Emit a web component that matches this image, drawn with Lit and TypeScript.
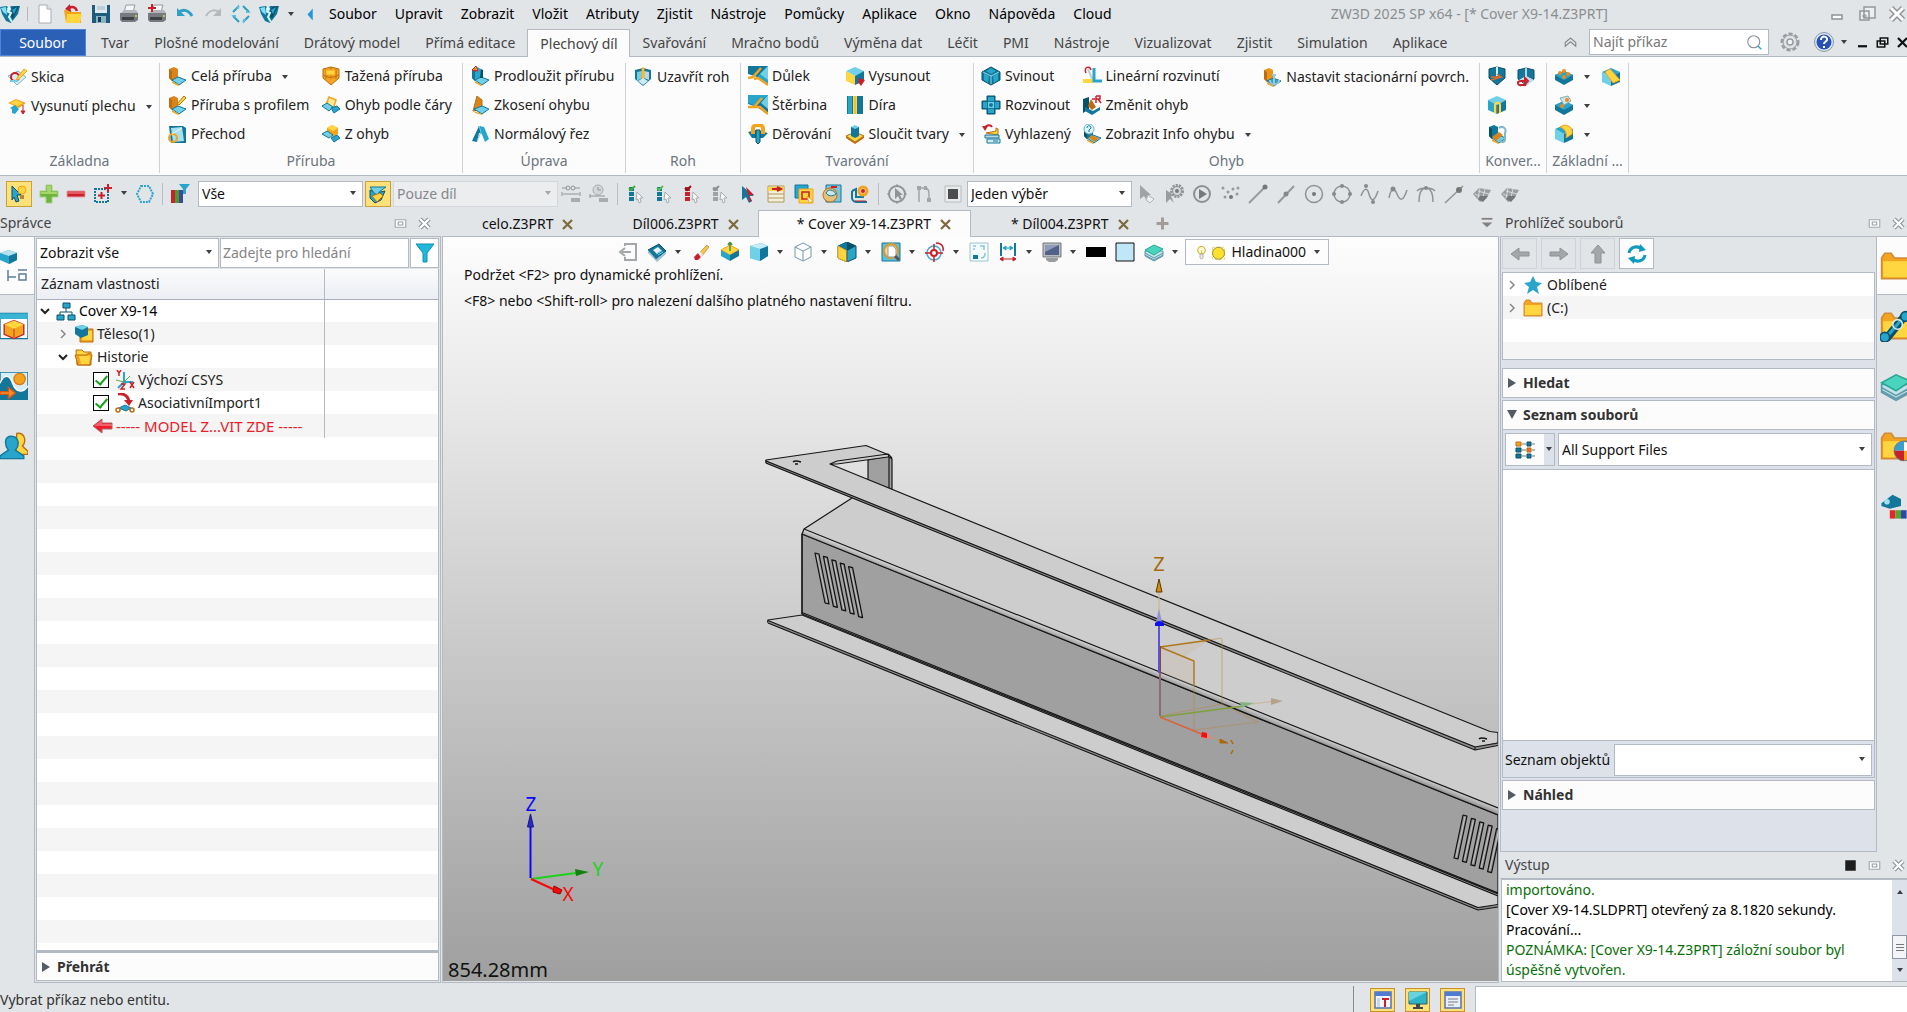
import { LitElement, html, svg, css } from "lit";
import { customElement, property, state } from "lit/decorators.js";
import { classMap } from "lit/directives/class-map.js";

const p = (d: string, fill = "none", stroke = "none", w = 1) =>
  svg`<path d=${d} fill=${fill} stroke=${stroke} stroke-width=${w}></path>`;
const c = (x: number, y: number, r: number, fill = "none", stroke = "none", w = 1) =>
  svg`<circle cx=${x} cy=${y} r=${r} fill=${fill} stroke=${stroke} stroke-width=${w}></circle>`;

const A = "#6fd0e8", T = "#27a5ca", D = "#12779b", N = "#0b5069";
const Y = "#ffd640", O = "#f2a41f", B = "#bd6c12", G = "#8f9396", R = "#c9202b";

const cube = (top: string, left: string, right: string) => [
  p("M10 1l9 4-9 5-9-5z", top),
  p("M1 5l9 5v9l-9-4z", left),
  p("M19 5l-9 5v9l9-4z", right),
];
const bracket = (plate: string, edge: string, base: string) => [
  p("M2 3l5-2 4 2v9l-6 3-3-3z", plate),
  p("M2 3l3 2v10l-3-3z", edge),
  p("M5 14l6-3 8 3-7 5z", base, D, 1),
  p("M5 15l7 4-1 1-6-3z", O),
];
const listIcon = (bar: string, tick: string) => [
  p("M3 3h5v4H3zM3 8h5v4H3zM3 13h5v4H3z", bar),
  p("M3 4l2 2 4-4", "none", tick, 2),
  p("M11 8l6 6h-3l1 4-2 1-1-4-2 1z", "#f7f7f7", "#a9adb1"),
];
const folder = (extra: unknown = null) => [
  p("M1 5l2-3h4l2 3h10v13H1z", O, "#d08a3a"),
  p("M2 7h16v10H2z", Y),
  extra,
];
const surface = [
  p("M1 10l6-6 12 2-5 9-6 3z", "#9a9d9f"),
  p("M3 10l11 5M6 7l11 3M8 4l-2 11M13 5l-3 12", "none", "#d8dadb"),
  p("M8 12h8l-5 6-5-3z", "#747779"),
];

const ICONS: Record<string, unknown> = {
  logo: [p("M0 3l7-1 2 3 2-3h9l-2 8-7 9-5-2-4-7z", D), p("M1 4l5-1 1 8-4-3z", "#7fe0f5"), p("M13 3l6-1-6 13-3-4z", N), p("M12 6l5-3-3 7z", T), p("M7 7l4 2-2 4 3 5", "none", "#d7f4fb", 2), c(9, 5, 2, "#e9f6fa")],
  newdoc: [p("M4 1h8l4 4v14H4z", "#fff", "#a8adb3"), p("M12 1v4h4", "#e8ebee", "#a8adb3")],
  open: [p("M1 6h6l2 2h9v11H3z", O), p("M4 10h15l-2 9H3z", Y), p("M14 7C13 3 9 2 6 4", "none", R, 2.5), p("M7 0L2 5l6 3z", R)],
  save: [p("M1 1h18v18H1z", "#1f5c7c"), p("M4 1h12v8H4z", "#dfe8ee"), p("M5 12h10v7H5z", "#8db2c4"), p("M7 13h3v5H7z", "#123f55"), p("M6 3h8M6 5h8", "none", "#9fb4bf")],
  print: [p("M5 8l2-7h9l-2 7z", "#f4f5f6", "#999"), p("M1 9h18v7l-3 2H3l-2-2z", "#777b80"), p("M2 9l3-3h12l2 3z", "#b2b6ba"), p("M3 13h12v3H3z", "#3f4347"), c(17, 12, 1, "#e8d23a")],
  undo: [p("M3 9C7 5 13 5 17 12", "none", "#2d9fc4", 3), p("M2 4v8h8z", "#2d9fc4")],
  redo: [p("M17 9C13 5 7 5 3 12", "none", "#b5b9bc", 2), p("M18 4v8h-8z", "#b5b9bc")],
  refresh: [p("M8 2L2 8M2 12l6 6M12 18l6-6M18 8l-6-6", "none", "#2a9fbf", 2), p("M8 0v5H5zM0 11h5v3zM12 20v-5h3zM20 9h-5V6z", "#5bc0d8")],
  back: [p("M13 2v16L6 10z", "#2196d9")],
  sketch: [p("M1 9l10-5 8 6-9 8z", "#d8eef6", "#7fb4c8"), c(8, 10, 4, "none", R, 2), p("M10 11l7-9 3 2-8 8-3 1z", Y, O), p("M3 14h8", "none", A, 2)],
  sheetpull: [p("M1 7l8-4 10 4-7 5z", O), p("M3 7l6-3 7 3-5 3z", Y), p("M3 12l5-3 4 4-4 5-3-1v-4z", T), p("M16 9v7M14 15l2 3 2-3z", R, R, 1)],
  flange: bracket("#d8861c", B, A),
  flangeprof: [bracket("#d8861c", B, A), p("M10 9l7-8 2 2-7 7z", Y, B)],
  transition: [p("M2 2h14l3 2v15H4z", D), p("M4 4l11-1 2 14-11 1z", "#a8dfec"), c(6, 14, 4, "none", O, 2), p("M5 10l10-6", "none", "#eaf9fc")],
  swept: [p("M2 3l8-2 8 2v9l-8 7-8-7z", O, B), p("M10 1v10M2 9l8 3 8-3M5 3v10M15 3v10", "none", B), p("M5 4h9v5H5z", Y, O)],
  bendline: [p("M8 2l7 3-3 9-7-4z", "#ffe79a", O, 1.5), p("M1 11l5-3 6 4-4 4z", A, D), p("M10 13l6-2 3 3-6 4z", T, D)],
  zbend: [p("M6 4l5-3 6 3v6l-5 3-6-3z", O), p("M6 4l5-3 6 3-5 3z", Y), p("M1 10l5-3 6 4-4 3z", A, D), p("M10 14l6-3 3 3-6 4z", T, D)],
  extend: [bracket(T, D, A), p("M5 6V2M2 4l4-4 2 5z", Y, R), p("M11 3l2 1v8h-3z", N)],
  taper: [p("M7 1l5 4v9l-9 2z", "#d8861c", B), p("M4 14l8-3 7 3-7 5z", A, D), p("M4 16l8 3v1l-7-2z", O)],
  normcut: [p("M2 17L9 2l5 2v6l-5-1-2 9z", D), p("M9 2l5 1 5 12-4 3-4-10z", T), p("M9 2l2 6-4 9", "none", A, 1)],
  corner: [p("M2 3l8-2 8 2v9l-8 7-8-7z", D), p("M4 5l5-1v7l-5 3z", A), p("M11 4l5 1v8l-5-2z", "#bcd7e0"), p("M9 1h2v11H9z", Y, O), p("M5 14l5-3 5 3-5 4z", "#cfeaf3")],
  dimple: [p("M0 0h20v19L0 12z", T), p("M20 0L9 11 0 8V0z", D), p("M0 8l9 3 11 9H0z", "#fcfcfc"), p("M0 12l5-1 8-9M6 13l4-1 10 7", "none", O, 2.5), p("M20 0v14l-8-6z", A)],
  louver: [p("M0 0h20v19L0 12z", D), p("M20 0L8 11 0 8V0z", T), p("M0 9l9 3 11 8H0z", "#fcfcfc"), p("M0 12h6l8-9M7 12h5l8 7", "none", O, 2.5), p("M20 0v14l-7-6z", A)],
  punch: [p("M0 8l8-2 12 3-5 5H4z", D), p("M5 10V4c0-4 10-4 10 0v6", "none", O, 4), p("M8 6h4v12l-2 2-2-2z", T, N)],
  extrude: [cube(A, Y, D), p("M14 12l6 2-4 6-3-4z", R)],
  hole: [p("M2 1h16v18H2z", D), p("M8 1h4v18H8z", Y), p("M10 1v18", "none", O), p("M3 1h4v18H3z", T)],
  merge: [p("M1 12l9-4 9 4-9 6z", Y, B), p("M1 12v2l9 6 9-6v-2l-9 6z", B), p("M6 3h8v9l-4 2-4-2z", D), p("M6 3l4-2 4 2-4 2z", A)],
  fold: [p("M1 6l9-5 9 5v8l-9 5-9-5z", D, N), p("M3 7l5 3-1 7-4-3zM17 7l-5 3 1 7 4-3zM10 2l5 3-5 3-5-3z", T), p("M2 6l8 4 8-4M10 10v8", "none", "#8fd6e8")],
  unfold: [p("M6 1h8v5h5v8h-5v5H6v-5H1V6h5z", D, N), p("M7 2h6v4H7zM2 7h4v6H2zM14 7h4v6h-4zM7 14h6v4H7z", T), p("M7 7h6v6H7z", A), c(10, 10, 2, D)],
  smooth: [p("M4 4C6 0 10 1 11 3", "none", R, 2), p("M1 2l3 5 3-5z", R), p("M5 9l10-2v-3l2 1v6z", Y, B), p("M4 11h14v3H4z", "#b5d8e3", D), p("M6 15h13v4H6z", "#d5e8ee", D), p("M12 17h5", "none", D)],
  linear: [p("M4 7C1 1 8-1 9 4", "none", R, 1.5), p("M6 3l5 12", "none", "#c0cdd2", 2), p("M1 15h10", "none", Y, 4), p("M12 2v13h8", "none", T, 3)],
  changebend: [p("M1 4l6-2v12l-6 4z", N), p("M3 12l8 4 7-4v3l-8 5-7-4z", D), p("M9 4l5 8-4 3-4-4z", B), p("M14 1v7M14 1h4v3h-4M16 4l3 4M10 4h3", "none", R, 1.5)],
  bendinfo: [bracket(D, N, A), c(7, 5, 5, "#dff4fa", "#6fb9cf"), p("M5 4c0-3 4-3 4 0L7 6v2", "none", D), p("M9 11l8 3-4 4-6-4z", "#d8861c")],
  stationary: [bracket("#e8951c", B, T), p("M12 7v11M8 13c0 6 9 6 9 0M10 8h4", "none", "#9fc6d3", 2)],
  conv1: [p("M2 3l8-2 8 2v9l-8 7-8-7z", D, N), p("M9 1h2v9H9z", "#d5edf4"), p("M4 11h10l-4-3M4 14l10-3", "none", "#e06a28", 1.5)],
  conv2: [p("M2 3l8-2 8 2v9l-8 6-8-6z", D, N), p("M10 1v9L3 14M10 10l7 4", "none", "#e7f5fa", 1.5), p("M4 13l6-4 8 4-7 5z", "#b8e0ee"), p("M10 14H5c-5 0-3 5 0 4h5M9 11l3 3-3 3z", "none", R, 2)],
  conv3: [cube(A, T, D), p("M8 18V10c0-3 5-3 5 0v8", "none", Y, 2), p("M10 11v7", "none", B)],
  conv4: [bracket(D, N, A), p("M5 13l7-5 4 3-7 6z", "#d8861c"), p("M12 4c4-3 8 1 6 5v6c0 4-5 4-5 0", "none", "#7fb7cd", 2)],
  base1: [p("M1 9l9-4 9 4v5l-9 5-9-5z", D), p("M1 9l9-4 9 4-9 5z", T), c(6, 7, 2, "#ed8a1e"), c(10, 5, 2, "#ed8a1e"), c(14, 8, 2, "#ed8a1e"), c(10, 11, 2, "#ed8a1e")],
  base2: [p("M1 10l9-4 9 4v5l-9 5-9-5z", D), p("M1 10l9-4 9 4-9 5z", T), p("M6 3l8-2 3 5-7 4z", "#cfe6ee", "#8aa"), c(8, 11, 2, "#ed8a1e"), c(13, 5, 2, "#ed8a1e")],
  base3: [cube(T, A, D), p("M6 3l5-2c6 1 8 4 7 9l-6 4c1-6-1-9-6-11z", Y, O)],
  base4: [cube(T, A, D), p("M9 2l10 11-7 3L4 5z", Y, O)],
  pick: [p("M3 2l9 9H8l2 6-3 1-2-5-2 3z", T, N), c(13, 6, 4, Y, O), p("M11 11h4v4h-4z", "#b0893a")],
  plus: [p("M7 1h6v6h6v6h-6v6H7v-6H1V7h6z", "#6db33c", "#a6cf86"), p("M8 2h4v6h6v2H2V8h6z", "#a5d667")],
  minus: [p("M1 7h18v6H1z", R, "#e3a5a8"), p("M2 8h16v2H2z", "#e65a62")],
  dotbox: [svg`<rect x="2" y="5" width="13" height="13" fill="none" stroke=${D} stroke-width="2" stroke-dasharray="2 1"></rect>`, p("M15 0v8M11 4h8M8.500 8v7M5 11.500h7", "none", R, 2)],
  dothex: [svg`<path d="M6 2h8l4 8-4 8H6L2 10z" fill="none" stroke=${T} stroke-width="2" stroke-dasharray="2 1"></path>`],
  filter: [p("M1 6h4v13H1z", R), p("M5 6h4v13H5z", "#4c9a2a"), p("M9 6h4v13H9z", "#3d4a9c"), p("M9 0h11l-4 5v5h-3V5z", T)],
  partonly: [p("M2 6l6 3 9-2-4 9-6 3-5-5z", T, N), p("M2 3h16l-7 5v4l-5-3z", A, D), p("M4 12l8-3 3 3-6 6z", Y, B)],
  ref1: [p("M1 4h5M14 4h5M2 10h16M1 8v4M19 8v4", "none", G), c(7, 4, 2, "none", G), c(12, 4, 2, "none", G), p("M10 14h9v4h-9z", "#a9acae")],
  ref2: [c(9, 6, 5, "#d4d6d8", "#a9acae"), p("M9 3v3h3M1 12h15M1 10v4", "none", G), p("M10 14h9v4h-9z", "#a9acae")],
  listgreen: listIcon(D, "#3faa3a"), listgreen2: listIcon(D, "#58c04e"), listred: listIcon(R, "#8c1720"), listgray: listIcon("#a0a3a5", "#8f9294"),
  arrowred: [p("M4 2v14l4-3 3 6 3-2-3-5h5z", D), p("M8 3l8 8h-5l3 6-2 1z", R)],
  rows: [p("M2 2h16v16H2z", "#f4efdc", "#b09a5a"), p("M2 3h16v4H2z", Y), p("M2 10h16M2 14h16", "none", "#b09a5a"), p("M6 5h7M11 3l4 2-4 2", R, R, 2)],
  layersel: [p("M1 1h13v13H1z", T, D), p("M5 5h14v14H5z", Y, O), p("M8 8h7v7H8z", "none", R, 1.5), p("M13 12l6 5-4 2z", "#fff", O)],
  paste: [p("M4 1h15v17H4z", "#7cc6da", D), c(8, 11, 7, "#e7c17c", B), p("M4 9c2-5 8-3 10 1-4 3-8 2-10-1z", "#c7e6ee", D), p("M9 3h6", "none", R, 2)],
  bracketgear: [p("M2 7v7c0 3 3 4 5 4h10M2 7l4-2v8h8", "none", D, 2), c(13, 7, 4, "none", O, 3), c(13, 7, 2, R), p("M5 17h11", "none", R)],
  cursorring: [c(10, 10, 8, "none", G, 2), p("M8 4v11l3-3 2 4 2-1-2-4h3z", G), p("M10 0v3M10 17v3M0 10h3M17 10h3", "none", G)],
  curveup: [p("M4 18V4h6c4 0 4 4 4 8v4", "none", "#a2a5a7", 1.5), p("M2 2h4v4H2zM12 14h4v4h-4zM9 2h3v4H9z", "#a2a5a7")],
  square: [p("M2 2h16v16H2z", "#e9ebec", "#b9bcbe"), p("M5 5h10v10H5z", "#4b4d4f")],
  cursor: [p("M4 1v14l4-3 4 6 2-2-3-5h4z", "#a0a3a5"), p("M12 11l6 4-4 4-4-3z", "#eee", "#b0b3b5")],
  gearcur: [svg`<circle cx="13" cy="7" r="5.500" fill="none" stroke="#8f9294" stroke-width="3" stroke-dasharray="2 1"></circle>`, c(13, 7, 4.5, "#d5d7d9", "#8f9294"), c(13, 7, 2, "#777a7c"), p("M2 6v13l4-4 4 4-3-7h4z", "#9a9da0")],
  play: [c(10, 10, 8, "none", "#8d9093", 2), p("M7 5l8 5-8 5z", "#77797c")],
  dots: [c(3, 4, 1.5, "#999"), c(8, 8, 1.5, "#999"), c(5, 13, 1.5, "#999"), c(13, 5, 1.5, "#999"), c(18, 4, 1.5, "#999"), c(11, 13, 2, "#777"), c(17, 10, 1.5, "#999")],
  lineend: [p("M1 19L17 3", "none", "#999", 2), c(17, 3, 2.5, "#777")],
  linemid: [p("M2 19L18 2", "none", "#999", 2), c(10, 10, 2.5, "#888")],
  circdot: [c(10, 10, 8.5, "none", "#8f9294", 1.5), c(10, 10, 2, "#777")],
  circquad: [c(10, 10, 8, "none", "#8f9294", 1.5), c(10, 2, 2, "#888"), c(10, 18, 2, "#888"), c(2, 10, 2, "#888"), c(18, 10, 2, "#888")],
  wave1: [p("M1 12c3-8 6-9 8-2s5 9 9-3", "none", "#8f9294", 1.5), c(6, 2, 2, "#888"), c(13, 18, 2, "#888")],
  wave2: [p("M1 14c2-10 5-11 8-4s6 8 10-4", "none", "#8f9294", 1.5), c(5, 5, 2.5, "#888")],
  tangent: [p("M1 7C5 3 15 3 19 7M3 18C3 10 5 5 9 4M17 18c0-8-2-13-6-14", "none", "#8f9294", 1.5), c(10, 4, 2, "#888")],
  linept: [p("M1 19L19 2", "none", "#8f9294", 1.5), c(15, 6, 3, "#777")],
  surface,
  exit: [p("M7 4V2h11v16H7v-3", "none", "#a4a7a9", 2), p("M13 10H4M7 6l-5 4 5 4", "none", "#a4a7a9", 2)],
  save3d: [p("M1 8l11-6 7 7-10 8z", D, N), p("M1 8l8 9 10-7v2l-9 8-9-9z", "#9dc3d0"), p("M6 8l5-3 4 4-5 3z", "#e7f1f5"), p("M9 12l5-3M11 13l5-3", "none", A)],
  eraser: [p("M8 11L16 3l2 2-7 9z", "#f3c64a", "#caa35a"), p("M3 15l4-4 3 4-3 3H4z", R), p("M7 11l2-2 3 4-2 2z", "#e9eef1")],
  topface: [p("M1 8l9-5 9 5-9 5z", Y, O), p("M1 8l9 5v6l-9-5z", T), p("M19 8l-9 5v6l9-5z", D), p("M10 9V1M8 3l2-3 2 3", "none", "#3f9440", 1.5)],
  shaded: [p("M1 4l11-3 7 3v10l-8 5-10-3z", T), p("M1 4l10 3v12l-10-3z", A), p("M11 7l8-3v10l-8 5z", D), p("M1 4l11-3 7 3-8 3z", "#c7edf6")],
  wire: [p("M10 1l8 4v10l-8 4-8-4V5z", "#fff", "#7396a8"), p("M2 5l8 4 8-4M10 9v10", "none", "#7396a8")],
  halfcube: [p("M10 0l9 4v12l-9 4-9-4V4z", T, N), p("M10 0L1 4l9 5z", D), p("M10 0l9 4-9 5z", N), p("M1 4l9 5v11l-9-4z", Y, O), p("M10 9v11", "none", N)],
  zoomfit: [p("M1 1h18v18H1z", "#5fc0dc", D), c(10, 9, 7, "#e8d9a8", "#d99b2a", 2), p("M7 4h5l3 3v8H7z", "#fff", "#999"), p("M14 14l4 4", "none", "#555", 3)],
  target: [c(9, 11, 7, "none", "#4aa9c8", 1.5), p("M9 2v18M0 11h18", "none", R, 1.5), c(9, 11, 3, "#fff", R, 2), p("M11 1c6 0 8 4 7 8", "none", R, 1.5)],
  sheet: [p("M1 1h18v18H1z", "#f4fbfd", "#9cc4d2"), p("M4 13h5v4H4z", D), p("M4 4h3M4 7h2M11 4h4v4M12 16c3 0 4-2 4-5", "none", "#8dc3d6", 1.5)],
  dimension: [p("M3 1v13M17 1v13", "none", D, 2), p("M5 6h10M5 6l3-2v4zM15 6l-3-2v4z", T, T), p("M2 17h16M2 17l3-2v4zM18 17l-3-2v4z", R, R, 1)],
  monitor: [p("M1 1h18v14H1z", "#b9bcc0", "#74787d"), p("M3 3h14v10H3z", "#506287"), p("M3 3h14L3 10z", "#8e9cb8"), p("M4 16h12v2l-3 2H7l-3-2z", "#999ca0")],
  black: [p("M0 5h20v10H0z", "#000")],
  lightblue: [p("M1 1h18v18H1z", "#bfe7f7", "#111")],
  layers: [p("M1 9v5l9 5 9-5V9z", "#c3e3ea", "#5f98a8"), p("M1 11l9 5 9-5M1 13l9 5 9-5", "none", "#5f98a8"), p("M1 8l9-5 9 4-9 6z", "#49d4bd", "#2aa794")],
  bulb: [c(10, 7, 5, "#fffbd6", "#c5b52c", 1.5), p("M8 12h4v5l-2 2-2-2z", "#eee", "#999"), p("M10 7v5", "none", "#c5b52c")],
  sun: [svg`<rect x="2" y="3" width="16" height="16" fill="none" stroke="#d7c62a" stroke-dasharray="3 3"></rect>`, c(10, 11, 8, "#ffe02c", "#7c7420")],
  tree: [p("M7 2h7v5H7zM1 14h7v5H1zM12 14h7v5h-7z", T, N), p("M10 7v4M4 14v-3h12v3", "none", N)],
  body: [p("M6 5h13v13H6z", O, B), p("M8 7h10v9H8z", Y), p("M1 3l7-2 6 2v8l-7 3-6-4z", D), p("M1 3l7-2 6 2-6 3z", A)],
  folderopen: [p("M2 3h6l2 2h7v13H3z", Y, B), p("M1 8h11l3-2 3 2-2 10H4z", O, B), p("M5 9h11l-1 8H7z", Y)],
  csys: [p("M9 12V2M9 12h9M9 12l-6 6", "none", T, 2), p("M2 0l2 3 2-3M4 3v3M15 12l4 6M19 12l-4 6M6 14h4l-4 5h4", "none", R, 1.5), p("M9 12l6-6M9 12l-8-2", "none", "#5fa857")],
  assoc: [p("M3 1c8-1 11 4 11 9", "none", R, 3), p("M9 7h9l-4 6z", R), p("M4 15l6-3 6 3-5 3z", T, D), c(3, 17, 2, "none", B, 1.5), c(17, 17, 2, "none", B, 1.5)],
  leftred: [p("M0 10l9-7v4h10v6H9v4z", "#ee1c2c", "#a66"), p("M1 10l8-6v4h10v2z", "#f4616b")],
  funnel: [p("M1 1h18l-7 9v9H8v-9z", "#1fb8dc", "#128fb0")],
  sideTree: [p("M0 4l9-3 8 3v7l-8 4-9-4z", T), p("M0 4l9-3 8 3-8 3z", "#b4e3ef"), p("M9 7l8-3v7l-8 4z", D)],
  sideCube: [p("M0 1h20v18H0z", "#fff", D), p("M0 1h20v4H0z", "#3bb4d4"), p("M3 9l7-3 7 3v7l-7 3-7-3z", O, R), p("M3 9l7-3 7 3-7 3z", Y), p("M10 12v6", "none", "#d4522a")],
  sideView: [p("M0 0h20v20H0z", "#d6eef6", D), p("M0 8c3-7 7-6 9 0s7 8 11 2v10H0z", D), p("M0 8c3-7 7-6 9 0s7 8 11 2", "none", "#fff"), c(14, 5, 4, O, "#d97b12"), p("M0 14h6v-3l5 4-5 4v-3H0z", "#ff8b2c", "#d25a12")],
  sideUser: [p("M12 1c6-1 7 6 4 9l4 4v2h-9z", Y, B), p("M8 3c6 0 6 7 3 10l6 4v2H0v-2l6-4C3 9 3 3 8 3z", T, D)],
  folder: folder(),
  folderbolt: folder([p("M4 18L16 3", "none", N, 5), p("M5 16L15 4", "none", T, 2), c(16, 4, 3, T, N), c(3, 17, 3, T, N), c(11, 9, 3, "none", "#d9eef4", 1)]),
  folderball: folder([c(15, 13, 6, "#fff", "#777"), p("M9 13a6 6 0 0 1 6-6v6z", "#3a9fcf"), p("M9 13h6v6a6 6 0 0 1-6-6z", R), p("M15 13h5a6 6 0 0 1-5 6z", O)]),
  colorpart: [p("M1 8l8-6 6 3v5l-8 2-6-2z", D), c(5, 7, 2, "#a0e1f0"), p("M7 13h4v6H7z", "#e5262b"), p("M11 13h4v6h-4z", "#57a52c"), p("M15 13h4v6h-4z", "#264ca8")],
  star: [p("M10 1l3 6 6 1-5 4 2 7-6-4-6 4 2-7-5-4 6-1z", T)],
  left: [p("M1 10l8-6v4h10v4H9v4z", "#a4a6a8", "#8f9193")],
  right: [p("M19 10l-8-6v4H1v4h10v4z", "#a4a6a8", "#8f9193")],
  up: [p("M10 1l7 8h-4v10H7V9H3z", "#a4a6a8", "#8f9193")],
  sync: [p("M2 9c1-6 8-8 13-4M18 11c-1 6-8 8-13 4", "none", "#1299c0", 3), p("M13 0l6 6-7 2zM7 20l-6-6 7-2z", "#1299c0")],
  grid: [p("M1 2h5v4H1z", O, B), p("M1 8h5v4H1zM1 14h5v4H1zM12 2h4v4h-4zM12 14h4v4h-4z", D, N), p("M12 8h4v4h-4z", "#e0702a", B), p("M7 4h4M7 10h4M7 16h4M17 4h3M17 10h3M17 16h3", "none", "#777")],
  minim: [p("M5 11h10v4H5z", "#fff", "#8f9395", 1.5)],
  restore: [p("M7 3h11v11H7zM3 7h9v9H3z", "#eceeef", "#94989b", 1.5), p("M6 11h3v2H6z", "none", "#94989b")],
  closewin: [p("M4 4l12 12M16 4L4 16", "none", "#8f9395", 6), p("M4 4l12 12M16 4L4 16", "none", "#fff", 3)],
  pin: [p("M3 5h14v10H3z", "#fff", "#a3a7ab", 1.5), p("M7 8h6v4H7z", "#fff", "#999da2", 1.5)],
  minblack: [p("M4 15h12", "none", "#111", 3)],
  restblack: [p("M7 4h10v8H7zM3 8h10v8H3z", "#e1e5e8", "#111", 2)],
  xblack: [p("M4 4l12 12M16 4L4 16", "none", "#111", 3)],
  collapse: [p("M3 10l7-6 7 6v5l-7-6-7 6z", "none", "#84888c", 1.5)],
  lens: [c(9, 9, 8, "none", "#8a9096", 1.5), p("M15 15l4 4", "none", T, 2)],
  gear: [svg`<circle cx="10" cy="10" r="8" fill="none" stroke="#999da1" stroke-width="3" stroke-dasharray="4 2"></circle>`, c(10, 10, 7, "#dfe2e4", "#999da1"), c(10, 10, 3, "#f1f2f3", "#999da1", 1.5)],
  help: [c(10, 10, 9.5, "#dfe5ee", "#8b97ab"), c(10, 10, 7.5, "#2752b8"), p("M7 8c0-5 7-4 6 0-1 2-3 2-3 4M10 14v2", "none", "#fff", 2)],
  close: [p("M4 4l12 12M16 4L4 16", "none", "#7d6b3f", 3)],
  add: [p("M10 2v16M2 10h16", "none", "#a39b98", 4)],
  overflow: [p("M1 3h18", "none", "#84807f", 3), p("M1 9h18l-9 8z", "#84807f")],
  stop: [p("M3 3h14v14H3z", "#1d1d1d")],
  stTools: [p("M2 2h16v16H2z", "#f2f5fb", "#5571b4", 1.5), p("M2 2h16v4H2z", "#4f7bd0"), p("M4 8h3v9H4z", "#c9d5e9"), p("M12 9v8M9 9h7", "none", R, 2)],
  stScreen: [p("M1 2h18v12H1z", "#2fb3c7", "#27606c"), p("M1 2h18L1 11z", "#66d3df"), p("M8 14h4v3h3v2H5v-2h3z", "#3f4a50")],
  stDoc: [p("M2 2h16v16H2z", "#e9eef7", "#5571b4", 1.5), p("M2 2h16v4H2z", "#4f7bd0"), p("M5 9h10M5 12h10M5 15h6", "none", "#9aa4b5", 1.5)],
};
ICONS.printadd = [ICONS.print, p("M5 0v8M1 4h8", "none", R, 2)];

const icon = (name: string, size = "") =>
  html`<svg class="ic ${size}" viewBox="0 0 20 20" aria-hidden="true">${ICONS[name]}</svg>`;
const caret = () => html`<svg class="caret" viewBox="0 0 8 5" aria-hidden="true"><path d="M1 0h6l-3 4z" fill="#3d3f42"></path></svg>`;

const base = css`
  * { box-sizing: border-box; }
  button, input, select { font: inherit; color: inherit; margin: 0; }
  button { border: 0; background: none; padding: 0; display: inline-flex; align-items: center; white-space: nowrap; cursor: pointer; }
  .ic { width: 20px; height: 20px; flex: none; display: block; }
  .ic.sm { width: 15px; height: 15px; }
  .ic.xs { width: 12px; height: 12px; }
  .ic.lg { width: 28px; height: 28px; }
  .ic.xl { width: 32px; height: 32px; }
  .caret { width: 8px; height: 5px; flex: none; display: block; }
`;

@customElement("combo-box")
class ComboBox extends LitElement {
  @property() value = "";
  @property() label = "";
  @property({ type: Boolean }) off = false;
  static styles = [base, css`
    :host { display: block; position: relative; }
    select { appearance: none; width: 100%; height: 100%; border: 1px solid #b4bac4; border-radius: 0; background: #fff; padding: 0 16px 0 3px; color: #111; }
    select:disabled { background: #ebedef; color: #85888c; border-color: #d3d6da; opacity: 1; }
    .caret { position: absolute; right: 6px; top: calc(50% - 3px); pointer-events: none; }
    select:disabled + .caret { opacity: 0.4; }
  `];
  render() {
    return html`<select aria-label=${this.label} ?disabled=${this.off}><option>${this.value}</option></select>${caret()}`;
  }
}

type Cmd = [string, string, boolean?];
const MENU = ["Soubor", "Upravit", "Zobrazit", "Vložit", "Atributy", "Zjistit", "Nástroje", "Pomůcky", "Aplikace", "Okno", "Nápověda", "Cloud"];
const TABS = ["Tvar", "Plošné modelování", "Drátový model", "Přímá editace", "Plechový díl", "Svařování", "Mračno bodů", "Výměna dat", "Léčit", "PMI", "Nástroje", "Vizualizovat", "Zjistit", "Simulation", "Aplikace"];
const GROUPS: { name: string; roomy?: boolean; cols: Cmd[][] }[] = [
  { name: "Základna", cols: [[["sketch", "Skica"], ["sheetpull", "Vysunutí plechu", true]]] },
  { name: "Příruba", roomy: true, cols: [[["flange", "Celá příruba", true], ["flangeprof", "Příruba s profilem"], ["transition", "Přechod"]], [["swept", "Tažená příruba"], ["bendline", "Ohyb podle čáry"], ["zbend", "Z ohyb"]]] },
  { name: "Úprava", cols: [[["extend", "Prodloužit přírubu"], ["taper", "Zkosení ohybu"], ["normcut", "Normálový řez"]]] },
  { name: "Roh", cols: [[["corner", "Uzavřít roh"]]] },
  { name: "Tvarování", cols: [[["dimple", "Důlek"], ["louver", "Štěrbina"], ["punch", "Děrování"]], [["extrude", "Vysunout"], ["hole", "Díra"], ["merge", "Sloučit tvary", true]]] },
  { name: "Ohyb", roomy: true, cols: [[["fold", "Svinout"], ["unfold", "Rozvinout"], ["smooth", "Vyhlazený"]], [["linear", "Lineární rozvinutí"], ["changebend", "Změnit ohyb"], ["bendinfo", "Zobrazit Info ohybu", true]], [["stationary", "Nastavit stacionární povrch."]]] },
  { name: "Konver...", roomy: true, cols: [[["conv1", ""], ["conv3", ""], ["conv4", ""]], [["conv2", ""]]] },
  { name: "Základní ...", cols: [[["base1", "", true], ["base2", "", true], ["base3", "", true]], [["base4", ""]]] },
];

@customElement("app-ribbon")
class AppRibbon extends LitElement {
  @state() active = "Plechový díl";
  static styles = [base, css`
    :host { display: block; color: #222; }
    .title { display: flex; align-items: center; height: 28px; }
    .quick { display: flex; align-items: center; gap: 8px; padding-right: 11px; }
    .vsep { width: 1px; height: 14px; background: #b4b8bd; margin: 0 -1px; }
    .menu { display: flex; gap: 18px; color: #000; }
    .apptitle { flex: 1; text-align: center; color: #8a8d90; white-space: nowrap; }
    .win { display: flex; gap: 10px; }
    .tabs { display: flex; height: 29px; border-bottom: 1px solid #b4bac4; align-items: stretch; padding-top: 1px; }
    .file { width: 86px; justify-content: center; background: #2a61b7; color: #fff; border: 1px solid #4d86d8; height: 27px; margin-right: 2px; }
    .tab { padding: 0 12px 0 13px; color: #444; border: 0; height: 28px; }
    .tab.on { background: #fcfcfc; border: 1px solid #b4bac4; border-bottom: 0; padding: 0 11px 0 12px; }
    .right { margin: 0 -3px 0 auto; display: flex; align-items: center; gap: 11px; height: 26px; }
    .find { display: flex; align-items: center; width: 180px; height: 26px; background: #fff; border: 1px solid #b4bac4; padding: 0 6px 0 3px; }
    .find input { border: 0; outline: 0; width: 100%; min-width: 0; background: none; padding: 0; }
    .find input::placeholder { color: #777; opacity: 1; }
    .help { gap: 6px; margin-left: 3px; }
    .docwin { display: flex; gap: 5px; margin-left: -4px; }
    .body { display: grid; grid-template-columns: 160px 303px 163px 115px 233px 506px 67px 82px 1fr; height: 119px; background: #fcfcfc; border-bottom: 1px solid #b4bac4; padding-top: 6px; }
    .group { border-right: 1px solid #cdd1d8; margin-bottom: 2px; display: flex; flex-direction: column; min-width: 0; }
    .cols { display: flex; justify-content: space-between; padding: 1px 7px 0; height: 87px; }
    .roomy .cols { padding-right: 10px; }
    .col { display: flex; flex-direction: column; }
    .cmd { height: 29px; gap: 4px; padding-bottom: 4px; }
    .cmd .caret { margin: 3px 0 0 5px; }
    .name { text-align: center; color: #6b7480; line-height: 22px; white-space: nowrap; }
  `];
  render() {
    return html`
      <div class="title">
        <div class="quick">${icon("logo")}<span class="vsep"></span>
          ${["newdoc", "open", "save", "print", "printadd", "undo", "redo", "refresh", "logo"].map((n) => html`<button aria-label=${n}>${icon(n)}</button>`)}
          ${caret()}<button aria-label="Zpět">${icon("back", "sm")}</button></div>
        <nav class="menu">${MENU.map((m) => html`<button>${m}</button>`)}</nav>
        <div class="apptitle">ZW3D 2025 SP x64 - [* Cover X9-14.Z3PRT]</div>
        <div class="win">${["minim", "restore", "closewin"].map((n) => html`<button aria-label=${n}>${icon(n)}</button>`)}</div>
      </div>
      <div class="tabs">
        <button class="file">Soubor</button>
        ${TABS.map((t) => html`<button class=${classMap({ tab: true, on: t === this.active })} @click=${() => (this.active = t)}>${t}</button>`)}
        <div class="right">
          <button aria-label="Sbalit">${icon("collapse", "sm")}</button>
          <label class="find"><input aria-label="Najít příkaz" placeholder="Najít příkaz" />${icon("lens", "sm")}</label>
          <button aria-label="Nastavení">${icon("gear")}</button>
          <button class="help" aria-label="Nápověda">${icon("help")}${caret()}</button>
          <div class="docwin">${["minblack", "restblack", "xblack"].map((n) => html`<button aria-label=${n}>${icon(n, "sm")}</button>`)}</div>
        </div>
      </div>
      <div class="body">
        ${GROUPS.map((g) => html`<section class=${classMap({ group: true, roomy: !!g.roomy })}><div class="cols">
          ${g.cols.map((col) => html`<div class="col">${col.map(([i, t, more]) => html`<button class="cmd" aria-label=${t || i}>${icon(i)}${t ? html`<span>${t}</span>` : null}${more ? caret() : null}</button>`)}</div>`)}
        </div><div class="name">${g.name}</div></section>`)}
      </div>`;
  }
}

@customElement("selection-bar")
class SelectionBar extends LitElement {
  static styles = [base, css`
    :host { display: flex; align-items: center; height: 34px; padding: 1px 0 0 6px; gap: 8px; }
    .set { display: flex; align-items: center; gap: 7px; }
    .set.wide { gap: 8px; margin-left: -5px; }
    .set.tight { gap: 2px; }
    .toggle { width: 26px; height: 26px; background: #ffe17a; border: 1px solid #c9a13a; justify-content: center; }
    .sep { width: 1px; height: 22px; background: #b9bdc3; }
    .box { width: 165px; height: 26px; }
    .pull { margin: 0 -4px; }
  `];
  btn = (n: string) => html`<button aria-label=${n}>${icon(n)}</button>`;
  render() {
    return html`
      <div class="set"><button class="toggle" aria-label="pick">${icon("pick")}</button>
        ${["plus", "minus", "dotbox"].map(this.btn)}${caret()}${this.btn("dothex")}<span class="sep"></span>${this.btn("filter")}</div>
      <div class="set tight"><combo-box class="box" label="Filtr" value="Vše"></combo-box>
        <button class="toggle" aria-label="partonly">${icon("partonly")}</button>
        <combo-box class="box" label="Rozsah" value="Pouze díl" off></combo-box></div>
      <div class="set wide">${["ref1", "ref2"].map(this.btn)}<span class="sep"></span>
        ${["listgreen", "listgreen2", "listred", "listgray", "arrowred", "rows", "layersel", "paste", "bracketgear"].map(this.btn)}<span class="sep"></span>
        ${["cursorring", "curveup", "square"].map(this.btn)}
        <combo-box class="box pull" label="Výběr" value="Jeden výběr"></combo-box>
        ${["cursor", "gearcur", "play", "dots", "lineend", "linemid", "circdot", "circquad", "wave1", "wave2", "tangent", "linept", "surface", "surface"].map(this.btn)}</div>`;
  }
}

const panel = css`
  .head { display: flex; align-items: center; height: 27px; border-bottom: 1px solid #b4bac4; color: #444; gap: 9px; padding-right: 9px; }
  .head .t { flex: 1; }
  .fold { width: 100%; height: 30px; background: #fcfcfc; border: 1px solid #b4bac4; font-weight: 700; color: #333; padding-left: 4px; gap: 6px; }
  .chev { width: 10px; height: 10px; flex: none; }
`;
const tri = (open = false) => html`<svg class="chev" viewBox="0 0 10 10" aria-hidden="true"><path d=${open ? "M0 0h10l-5 9z" : "M1 0l8 5-8 5z"} fill="#555b63"></path></svg>`;
const chev = (open: boolean) => html`<svg class="chev" viewBox="0 0 10 10" aria-hidden="true"><path d=${open ? "M1 3l4 4 4-4" : "M3 1l4 4-4 4"} fill="none" stroke=${open ? "#222" : "#888"} stroke-width=${open ? 2 : 1.5}></path></svg>`;

@customElement("manager-panel")
class ManagerPanel extends LitElement {
  static styles = [base, panel, css`
    :host { display: flex; flex-direction: column; color: #222; }
    .main { flex: 1; display: flex; min-height: 0; }
    .strip { width: 34px; flex: none; display: flex; flex-direction: column; gap: 2px; }
    .strip button { height: 58px; }
    .strip button.on { background: #fcfcfc; border-bottom: 1px solid #b4bac4; flex-direction: column; align-items: flex-start; justify-content: center; }
    .mini { width: 28px; height: 14px; }
    .box { flex: 1; border: 1px solid #b4bac4; border-top: 0; padding: 1px; display: flex; flex-direction: column; min-width: 0; }
    .bar { display: flex; gap: 1px; height: 31px; padding-bottom: 1px; }
    .bar combo-box { flex: 1; }
    .bar input { flex: 1; min-width: 0; border: 1px solid #b4bac4; padding: 0 2px; background: #fff; }
    .bar input::placeholder { color: #858585; opacity: 1; }
    .bar button { width: 29px; background: #fff; border: 1px solid #b4bac4; justify-content: center; }
    .tree { flex: 1; border: solid #b4bac4; border-width: 0 1px 1px; background: repeating-linear-gradient(#fff 0 23px, #f5f5f5 23px 46px); background-position: 0 30px; min-height: 0; overflow: hidden; }
    table { border-collapse: collapse; width: 100%; table-layout: fixed; }
    th, td { padding: 0; text-align: left; font-weight: 400; white-space: nowrap; }
    .name { width: 287px; border-right: 1px solid #b4bac4; }
    th { height: 30px; background: linear-gradient(#fafbfc, #ebeef3); border-bottom: 1px solid #a9b0bc; }
    th.name { padding-left: 4px; }
    td { height: 23px; }
    .cell { display: flex; align-items: center; gap: 3px; height: 23px; }
    .cell .chev { margin-right: 3px; }
    .d0 { padding-left: 3px; color: #000; }
    .d1 { padding-left: 21px; }
    .d2 { padding-left: 56px; }
    .d2 input { margin-right: 3px; }
    .end { color: #e8202a; font-size: 15px; }
    input[type="checkbox"] { appearance: none; width: 16px; height: 16px; border: 1px solid #000; background: #fff; display: grid; place-items: center; }
    input[type="checkbox"]:checked::after { content: ""; width: 5px; height: 10px; border: solid #15a018; border-width: 0 2px 2px 0; transform: rotate(40deg); margin-bottom: 3px; }
    .fold { border-top-width: 2px; }
  `];
  render() {
    return html`
      <div class="head"><span class="t">Správce</span><button aria-label="Ukotvit">${icon("pin", "sm")}</button><button aria-label="Zavřít">${icon("closewin", "sm")}</button></div>
      <div class="main">
        <div class="strip">
          <button class="on" aria-label="Strom">${icon("sideTree")}<svg class="mini" viewBox="0 0 28 14"><path d="M18 1h9M8 1v11M8 8h8M19 5h7v6h-7z" fill="none" stroke="#5d7f95" stroke-width="1.5"></path></svg></button>
          ${["sideCube", "sideView", "sideUser"].map((n) => html`<button aria-label=${n}>${icon(n, "lg")}</button>`)}
        </div>
        <div class="box">
          <div class="bar"><combo-box label="Zobrazení" value="Zobrazit vše"></combo-box><input aria-label="Hledat" placeholder="Zadejte pro hledání" /><button aria-label="Filtr">${icon("funnel")}</button></div>
          <div class="tree"><table>
            <thead><tr><th class="name">Záznam vlastnosti</th><th></th></tr></thead>
            <tbody>
              <tr><td class="name"><div class="cell d0">${chev(true)}${icon("tree")}Cover X9-14</div></td><td></td></tr>
              <tr><td class="name"><div class="cell d1">${chev(false)}${icon("body")}Těleso(1)</div></td><td></td></tr>
              <tr><td class="name"><div class="cell d1">${chev(true)}${icon("folderopen")}Historie</div></td><td></td></tr>
              <tr><td class="name"><label class="cell d2"><input type="checkbox" checked />${icon("csys")}Výchozí CSYS</label></td><td></td></tr>
              <tr><td class="name"><label class="cell d2"><input type="checkbox" checked />${icon("assoc")}AsociativníImport1</label></td><td></td></tr>
              <tr><td class="name"><div class="cell d2 end">${icon("leftred")}----- MODEL Z...VIT ZDE -----</div></td><td></td></tr>
            </tbody></table></div>
          <button class="fold">${tri()}Přehrát</button>
        </div>
      </div>`;
  }
}

const slots = (x: number, y: number, dx: number, dy: number, n: number) =>
  Array.from({ length: n }, (_, i) => {
    const sx = x + i * 8.4, sy = y + i * 3.4;
    return svg`<path d=${`M${sx} ${sy}l4 1 ${dx} ${dy}-4-1z`} fill="#8f8f8f" stroke="#111" stroke-width="1.2"></path>
      <path d=${`M${sx + 2} ${sy + 2}l${dx} ${dy - 3}`} stroke="#c4c4c4" stroke-width="1"></path>`;
  });

@customElement("model-view")
class ModelView extends LitElement {
  static styles = css`
    :host { position: absolute; inset: 0; display: block; }
    svg { width: 100%; height: 100%; display: block; }
  `;
  render() {
    const k = "#161616";
    return html`<svg viewBox="443 237 1055 744" preserveAspectRatio="xMidYMid slice" role="img" aria-label="Model Cover X9-14">
      <defs>
        <linearGradient id="bend" gradientUnits="userSpaceOnUse" x1="1150" y1="668" x2="1147.4" y2="674.5"><stop offset="0" stop-color="#d6d6d6"></stop><stop offset="1" stop-color="#8e8e8e"></stop></linearGradient>
      </defs>
      <g stroke-linejoin="round">
        ${p("M852 498L803 529 1498 808V744L1475 748z", "#cdcdcd")}
        ${p("M802 534L1498 815V894L802 614z", "#a0a0a0", k, 1.2)}
        ${p("M804 529L1498 808V815L802 534z", "url(#bend)")}
        ${p("M852 498L804 529L1498 808M802 534L1498 815M804 529l-2 5v80", "none", k, 1.2)}
        ${p("M768 620l34-5L1498 896V906l-20 2L768 622z", "#cdcdcd", k, 1.2)}
        ${p("M802 612.500L1498 893M768 620v3M1478 907v3", "none", k, 1.2)}
        ${p("M768 622L1478 909l20-3", "none", "#8b8b8b", 2)}
        ${p("M768 623L1478 910l20-3M768 620.500L1478 907.500l20-3", "none", k, 1.1)}
        ${slots(815, 553, 10, 50, 5)}
        ${slots(1463, 815, -9, 43, 5)}
        ${p("M868 460l20-4 4 3v31l-24-9z", "#a0a0a0", k, 1.2)}
        ${p("M889 457v32", "none", k, 1.2)}
        ${p("M766 460L866 445.500 889 455l-1 2-51 7-7 0L1080 566 1490 731.500l8 1V743l-23 5L766 462z", "#cdcdcd", k, 1.2)}
        ${p("M830 464l7-3 51-7 4 4", "none", k, 1.2)}
        ${p("M766 462L1475 748 1498 744", "none", "#8b8b8b", 3)}
        ${p("M766 463L1475 750 1498 745.500M766 461L1475 747l23-4M766 460v3M1475 747v3", "none", k, 1.1)}
        ${p("M793 462q2-2 8 0M795 464h3M1479 739q2-2 8 0M1482 741h3", "none", k, 1.4)}
      </g>
      <g stroke-width="1.300">
        ${p("M1160 647l50-7-50 33zM1160 647l34 14v25l-34-14z", "#c8b9a455")}
        <g opacity="0.45">${p("M1194 686v44l64-8-36-18v-65M1160 716l62-12", "none", "#b88443", 1.2)}</g>
        ${p("M1160 647l50-7M1160 647l34 14v25", "none", "#b0761c", 1.4)}
        <g opacity="0.4">${p("M1210 640l12-2", "none", "#b0761c", 1.2)}</g>
        ${p("M1160 716V673", "none", "#8c6a78", 2)}
        ${p("M1160 673V646", "none", "#8a4a30", 2)}
        ${p("M1159 673V622", "none", "#5a54dd", 2)}
        ${p("M1159 622V590", "none", "#c9b694", 1.2)}
        ${p("M1156 622l3-13 3 13z", "#9290cf")}
        ${p("M1155 623q4-4 9 0v3h-9z", "#1010ee")}
        ${p("M1156 592l3-13 3 13z", "#d48a0a", "#5a3900", 1)}
        ${p("M1160 717l84-11", "none", "#7ea03c", 1.5)}
        ${p("M1240 702l15 1-14 5z", "#86b386")}
        ${p("M1252 704l22-3", "none", "#c8b69c", 1.2)}
        ${p("M1271 698l12 3-12 4z", "#b5a28a")}
        ${p("M1160 717l44 18", "none", "#d9643c", 1.5)}
        ${p("M1204 731l9 7-10 1z", "#d88")}
        ${p("M1202 732l5 1 0 5-6-1z", "#f01010")}
        ${p("M1209 736l12 6", "none", "#c39660", 1)}
        ${p("M1220 739l8 4-8 0z", "#a8690a", "#a8690a", 1)}
        ${p("M1231 740l2 4M1233 750l-2 4", "none", "#b06a00", 1.5)}
        <text x="1159" y="571" font-size="20" text-anchor="middle" fill="#a8690a">Z</text>
      </g>
      <g>
        ${p("M530.500 878V822", "none", "#0a0af5", 2)}
        ${p("M527.500 827l3-13 3 13z", "#2a2ac8", "#14148a")}
        ${p("M531 879l45-6", "none", "#1fd01f", 2)}
        ${p("M575 869l14 3-13 4z", "#128112")}
        ${p("M531 879l24 11", "none", "#f50a0a", 2)}
        ${p("M554 886l8 4-2 4-7-2z", "#f50a0a", "#900")}
        <text x="531" y="811" font-size="19" text-anchor="middle" fill="#0a0af5">Z</text>
        <text x="598" y="876" font-size="19" text-anchor="middle" fill="#1fd01f">Y</text>
        <text x="568" y="901" font-size="19" text-anchor="middle" fill="#f50a0a">X</text>
      </g>
    </svg>`;
  }
}

@customElement("document-area")
class DocumentArea extends LitElement {
  static styles = [base, css`
    :host { display: flex; flex-direction: column; color: #111; min-width: 0; padding: 0 1px; }
    .tabs { display: flex; height: 26px; padding-right: 6px; align-items: center; }
    .tab { display: flex; align-items: center; height: 26px; gap: 7px; padding: 2px 17px 0 40px; white-space: nowrap; }
    .tab.on { background: #fcfcfc; border: 1px solid #b4bac4; border-bottom: 0; height: 27px; margin-bottom: -1px; padding: 0 17px 0 38px; z-index: 1; }
    .add { margin-left: 7px; }
    .more { margin-left: auto; }
    .frame { flex: 1; border: 1px solid #b4bac4; padding-bottom: 1px; display: flex; min-height: 0; }
    .canvas { position: relative; flex: 1; background: linear-gradient(#fdfdfd, #9f9f9f); display: flex; flex-direction: column; overflow: hidden; }
    .tools { display: flex; justify-content: center; align-items: center; gap: 9px; height: 29px; position: relative; padding: 1px 0 0 5px; }
    .tools button { gap: 7px; }
    .layer { position: relative; display: flex; align-items: center; width: 144px; height: 26px; border: 1px solid #b4bac4; background: #fdfdfd; padding-left: 8px; gap: 2px; margin-left: -3px; }
    .tools > .drop { min-width: 35px; }
    .layer select { appearance: none; border: 0; background: none; flex: 1; min-width: 0; padding: 0 0 0 4px; color: #111; }
    .layer .caret { position: absolute; right: 7px; top: 10px; pointer-events: none; }
    .hint { position: relative; padding-left: 21px; line-height: 26px; margin: 0; }
    .hints { margin-top: -4px; }
    .scale { position: relative; margin: auto 0 0 5px; font-size: 20px; line-height: 22px; }
  `];
  render() {
    const docs = ["celo.Z3PRT", "Díl006.Z3PRT", "* Cover X9-14.Z3PRT", "* Díl004.Z3PRT"];
    const tools: [string, boolean][] = [["exit", false], ["save3d", true], ["eraser", false], ["topface", false], ["shaded", true], ["wire", true], ["halfcube", true], ["zoomfit", true], ["target", true], ["sheet", false], ["dimension", true], ["monitor", true], ["black", false], ["lightblue", false], ["layers", true]];
    return html`
      <div class="tabs">
        ${docs.map((d, i) => html`<div class=${classMap({ tab: true, on: i === 2 })}><button>${d}</button><button aria-label="Zavřít ${d}">${icon("close", "sm")}</button></div>`)}
        <button class="add" aria-label="Nový">${icon("add", "sm")}</button>
        <button class="more" aria-label="Další">${icon("overflow", "xs")}</button>
      </div>
      <div class="frame"><div class="canvas">
        <model-view></model-view>
        <div class="tools">${tools.map(([n, m]) => html`<button class=${m ? "drop" : ""} aria-label=${n}>${icon(n)}${m ? caret() : null}</button>`)}
          <div class="layer">${icon("bulb", "sm")}${icon("sun", "sm")}<select aria-label="Hladina"><option>Hladina000</option></select>${caret()}</div></div>
        <div class="hints"><p class="hint">Podržet &lt;F2&gt; pro dynamické prohlížení.</p>
        <p class="hint">&lt;F8&gt; nebo &lt;Shift-roll&gt; pro nalezení dalšího platného nastavení filtru.</p></div>
        <div class="scale">854.28mm</div>
      </div></div>`;
  }
}

@customElement("file-browser")
class FileBrowser extends LitElement {
  static styles = [base, panel, css`
    :host { display: flex; flex-direction: column; color: #222; }
    .head { padding-left: 5px; padding-right: 1px; }
    .row { display: flex; flex: 1; min-height: 0; }
    .box { flex: 1; display: flex; flex-direction: column; background: #dde1e9; border: 1px solid #b4bac4; border-top: 0; padding: 1px; min-width: 0; }
    .nav { display: flex; gap: 4px; height: 35px; margin: -1px -1px 0; padding: 1px 1px 3px; background: #e1e5e8; flex: none; }
    .nav button { width: 35px; justify-content: center; border: 1px solid #cfd3d9; }
    .nav button.on { background: #fcfcfc; border-color: #b4bac4; }
    .tree { height: 88px; border: 1px solid #b4bac4; background: repeating-linear-gradient(#fff 0 23px, #f5f5f5 23px 46px); margin-bottom: 8px; flex: none; }
    .item { display: flex; height: 23px; align-items: center; padding-left: 4px; gap: 4px; }
    .item .chev { margin-right: 2px; }
    .fold { flex: none; }
    .fold + .fold { margin-top: 2px; }
    .files { display: flex; gap: 3px; padding: 3px 2px; height: 39px; border: solid #b4bac4; border-width: 0 1px; flex: none; }
    .files button { width: 50px; background: linear-gradient(90deg, #fcfcfc 38px, #dde1e9 38px); border: 1px solid #b4bac4; padding-left: 9px; gap: 10px; }
    .files combo-box { flex: 1; }
    .list { flex: 1; background: #fff; border: 1px solid #b4bac4; }
    .objs { display: flex; align-items: center; gap: 4px; height: 37px; padding: 3px 2px 1px; border: solid #b4bac4; border-width: 0 1px 1px; color: #111; flex: none; }
    .objs combo-box { flex: 1; height: 100%; }
    .view { margin: 2px 0 40px; }
    .strip { width: 30px; flex: none; display: flex; flex-direction: column; gap: 2px; overflow: hidden; }
    .strip button { height: 58px; padding-left: 3px; }
    .strip button.on { background: #fcfcfc; border-bottom: 1px solid #b4bac4; }
    .out { display: flex; height: 103px; background: #fff; border: 1px solid #b4bac4; border-right: 0; margin: 0 0 1px 1px; color: #000; flex: none; }
    .log { flex: 1; padding: 0 4px; line-height: 20px; min-width: 0; }
    .log p { margin: 0; }
    .note { color: #087008; }
    .bar { width: 15px; background: #dde1e9; display: flex; flex-direction: column; align-items: center; padding: 9px 0 8px; }
    .thumb { width: 15px; height: 24px; border: 1px solid #8d97a8; background: #f2f4f7; margin: auto 0 9px; display: flex; flex-direction: column; justify-content: center; align-items: center; gap: 2px; }
    .thumb i { width: 8px; height: 1px; background: #777; }
    .upc { transform: rotate(180deg); }
  `];
  render() {
    return html`
      <div class="head"><span class="t">Prohlížeč souborů</span><button aria-label="Ukotvit">${icon("pin", "sm")}</button><button aria-label="Zavřít">${icon("closewin", "sm")}</button></div>
      <div class="row">
        <div class="box">
          <div class="nav">${["left", "right", "up"].map((n) => html`<button aria-label=${n}>${icon(n)}</button>`)}<button class="on" aria-label="Obnovit">${icon("sync")}</button></div>
          <div class="tree"><div class="item">${chev(false)}${icon("star")}Oblíbené</div><div class="item">${chev(false)}${icon("folder")}(C:)</div></div>
          <button class="fold">${tri()}Hledat</button>
          <button class="fold">${tri(true)}Seznam souborů</button>
          <div class="files"><button aria-label="Zobrazení">${icon("grid")}${caret()}</button><combo-box label="Typ souborů" value="All Support Files"></combo-box></div>
          <div class="list"></div>
          <div class="objs"><span>Seznam objektů</span><combo-box label="Seznam objektů" value=""></combo-box></div>
          <button class="fold view">${tri()}Náhled</button>
        </div>
        <div class="strip">${["folder", "folderbolt", "layers", "folderball", "colorpart"].map((n, i) => html`<button class=${i ? "" : "on"} aria-label=${n}>${icon(n, i === 4 ? "lg" : "xl")}</button>`)}</div>
      </div>
      <div class="head"><span class="t">Výstup</span><button aria-label="Zastavit">${icon("stop", "sm")}</button><button aria-label="Ukotvit">${icon("pin", "sm")}</button><button aria-label="Zavřít">${icon("closewin", "sm")}</button></div>
      <div class="out"><div class="log"><p class="note">importováno.</p><p>[Cover X9-14.SLDPRT] otevřený za 8.1820 sekundy.</p><p>Pracování...</p><p class="note">POZNÁMKA: [Cover X9-14.Z3PRT] záložní soubor byl úspěšně vytvořen.</p></div>
        <div class="bar"><span class="upc">${caret()}</span><span class="thumb"><i></i><i></i><i></i></span>${caret()}</div></div>`;
  }
}

@customElement("app-root")
class AppRoot extends LitElement {
  static styles = [base, css`
    :host { display: flex; flex-direction: column; height: 100vh; background: #e1e5e8; overflow: hidden; font: 14px/20px "Noto Sans", "Open Sans", sans-serif; }
    .work { flex: 1; display: flex; min-height: 0; }
    manager-panel { width: 441px; flex: none; }
    document-area { flex: 1; }
    file-browser { width: 407px; flex: none; }
    .status { display: flex; height: 29px; color: #333; padding-top: 3px; align-items: stretch; flex: none; }
    .msg { flex: 1; line-height: 28px; }
    .modes { display: flex; gap: 10px; padding: 2px 10px 0 16px; border-left: 1px solid #888c91; }
    .modes button { width: 25px; height: 24px; background: #ffe17a; border: 1px solid #c98f2a; justify-content: center; }
    .entry { width: 432px; border: 1px solid #b4bac4; border-right: 0; border-bottom: 0; background: #fff; padding: 0 4px; }
  `];
  render() {
    return html`<app-ribbon></app-ribbon><selection-bar></selection-bar>
      <div class="work"><manager-panel></manager-panel><document-area></document-area><file-browser></file-browser></div>
      <footer class="status"><span class="msg">Vybrat příkaz nebo entitu.</span>
        <div class="modes">${["stTools", "stScreen", "stDoc"].map((n) => html`<button aria-label=${n}>${icon(n)}</button>`)}</div>
        <input class="entry" aria-label="Příkazový řádek" /></footer>`;
  }
}
